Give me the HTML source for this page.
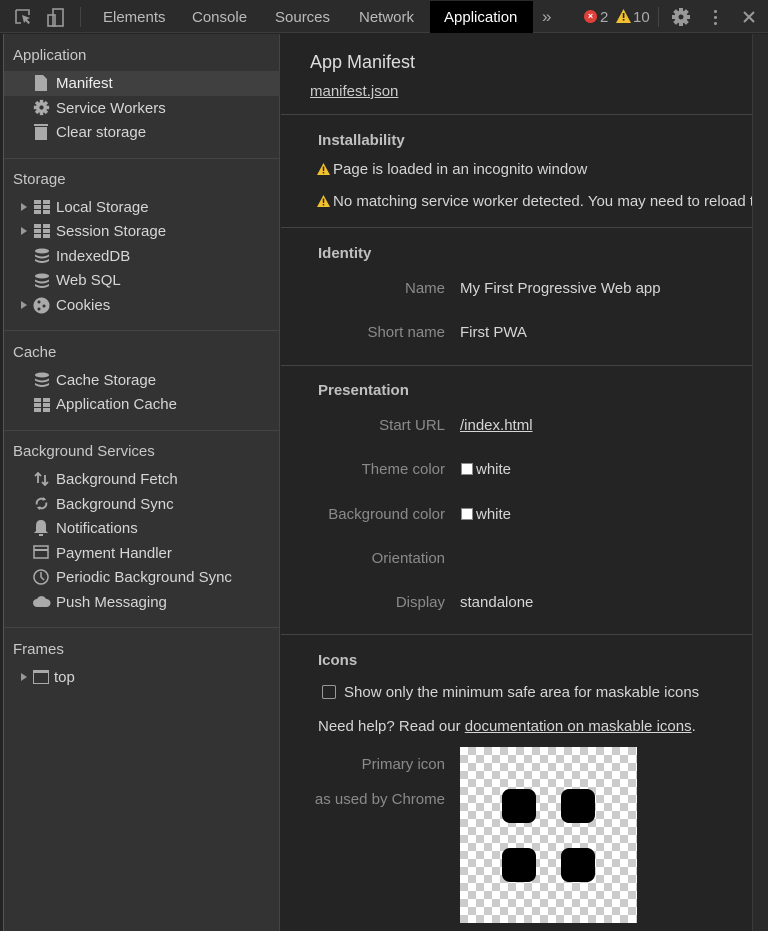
<!DOCTYPE html>
<html><head><style>
*{margin:0;padding:0;box-sizing:border-box}
body{width:768px;height:931px;background:#242424;font-family:"Liberation Sans",sans-serif;font-size:15px;color:#d6d6d6;position:relative;overflow:hidden}
.a{position:absolute;white-space:nowrap;line-height:18px;margin-top:1px}
#tb{position:absolute;left:0;top:0;width:768px;height:33px;background:#2b2b2b;border-bottom:1px solid #3c3c3c}
#sb{position:absolute;left:3px;top:34px;width:277px;height:897px;background:#333;border-right:1px solid #444;border-left:1px solid #555}
.sep{position:absolute;height:1px;background:#444}
.h{color:#c8c8c8}
.lbl{color:#8a8a8a;text-align:right;width:160px;left:285px}
.mh{font-weight:bold;color:#c0c0c0}
.ic{position:absolute;width:15px;height:15px}
.tri{position:absolute;width:0;height:0;border-left:6px solid #999;border-top:4px solid transparent;border-bottom:4px solid transparent}
.w{display:inline-block;vertical-align:-1px;margin-right:3px}
</style></head><body>
<svg width="0" height="0" style="position:absolute"><defs>
<g id="gear"><circle cx="10" cy="10" r="6.5" fill="#999"/><g stroke="#999" stroke-width="4"><path d="M10 1v18M1 10h18M3.6 3.6l12.8 12.8M16.4 3.6L3.6 16.4"/></g><circle cx="10" cy="10" r="2.5" fill="#2b2b2b"/></g>
<g id="warn"><path d="M6.5 0L13 12H0z" fill="#f2c12e"/><rect x="5.8" y="3.5" width="1.4" height="4.5" fill="#222"/><rect x="5.8" y="9" width="1.4" height="1.4" fill="#222"/></g>
</defs></svg>
<div id="tb">
 <svg class="ic" style="left:15px;top:9px;width:18px;height:17px" viewBox="0 0 18 17"><path d="M1 1h13v5M1 1v13h5" fill="none" stroke="#999" stroke-width="1.6"/><path d="M7 6l8 3-3 1.5 3 3-1.5 1.5-3-3L9 14z" fill="#999"/></svg>
 <svg class="ic" style="left:47px;top:8px;width:18px;height:19px" viewBox="0 0 18 19"><rect x="6" y="1" width="10" height="17" fill="none" stroke="#999" stroke-width="1.6"/><rect x="1" y="7" width="7" height="11" fill="none" stroke="#999" stroke-width="1.6"/></svg>
 <div style="position:absolute;left:80px;top:7px;width:1px;height:20px;background:#444"></div>
 <div class="a" style="left:103px;top:8px;color:#bbb">Elements</div>
 <div class="a" style="left:192px;top:8px;color:#bbb">Console</div>
 <div class="a" style="left:275px;top:8px;color:#bbb">Sources</div>
 <div class="a" style="left:359px;top:8px;color:#bbb">Network</div>
 <div style="position:absolute;left:430px;top:1px;width:103px;height:32px;background:#000"></div>
 <div class="a" style="left:444px;top:8px;color:#fff">Application</div>
 <div class="a" style="left:542px;top:7px;color:#aaa;font-size:17px">»</div>
 <div style="position:absolute;left:584px;top:10px;width:13px;height:13px;border-radius:50%;background:#e0403a;color:#fff;font-size:9px;line-height:13px;text-align:center;font-weight:bold">×</div>
 <div class="a" style="left:600px;top:8px;color:#aaa">2</div>
 <svg class="ic" style="left:616px;top:9px;width:15px;height:14px" viewBox="0 0 15 14"><path d="M7.5 0L15 14H0z" fill="#f2c12e"/><rect x="6.8" y="4" width="1.6" height="5" fill="#222"/><rect x="6.8" y="10" width="1.6" height="1.6" fill="#222"/></svg>
 <div class="a" style="left:633px;top:8px;color:#aaa">10</div>
 <div style="position:absolute;left:658px;top:7px;width:1px;height:20px;background:#444"></div>
 <svg class="ic" style="left:671px;top:7px;width:20px;height:20px" viewBox="0 0 20 20"><use href="#gear"/></svg>
 <div style="position:absolute;left:714px;top:10px;width:3px;height:3px;background:#999;border-radius:50%;box-shadow:0 6px #999,0 12px #999"></div>
 <svg class="ic" style="left:743px;top:11px;width:12px;height:12px" viewBox="0 0 12 12"><path d="M1 1l10 10M11 1L1 11" stroke="#999" stroke-width="2"/></svg>
</div>
<div id="sb"></div>
<div style="position:absolute;left:752px;top:34px;width:1px;height:897px;background:#3a3a3a"></div>
<div style="position:absolute;left:753px;top:34px;width:15px;height:897px;background:#2a2a2a"></div>
<div style="position:absolute;left:4px;top:71px;width:276px;height:25px;background:#404040"></div>

<div class="a h" style="left:13px;top:46px">Application</div>
<svg class="ic" style="left:35px;top:75px;width:12px;height:16px" viewBox="0 0 12 16"><path d="M0 0h8l4 4v12H0z" fill="#aaa"/></svg>
<div class="a" style="left:56px;top:74px;color:#eee">Manifest</div>
<svg class="ic" style="left:33px;top:99px;width:17px;height:17px" viewBox="0 0 20 20"><g><circle cx="10" cy="10" r="6.5" fill="#aaa"/><g stroke="#aaa" stroke-width="4"><path d="M10 1v18M1 10h18M3.6 3.6l12.8 12.8M16.4 3.6L3.6 16.4"/></g><circle cx="10" cy="10" r="2.5" fill="#333"/></g></svg>
<div class="a" style="left:56px;top:99px">Service Workers</div>
<svg class="ic" style="left:34px;top:123px;width:14px;height:17px" viewBox="0 0 14 17"><rect x="0" y="1" width="14" height="2" fill="#aaa"/><rect x="1" y="4" width="12" height="13" fill="#aaa"/></svg>
<div class="a" style="left:56px;top:123px">Clear storage</div>
<div class="sep" style="left:4px;top:158px;width:276px"></div>

<div class="a h" style="left:13px;top:170px">Storage</div>
<div class="tri" style="left:21px;top:203px"></div>
<svg class="ic" style="left:34px;top:200px;width:16px;height:14px" viewBox="0 0 16 14"><path d="M0 0h7v4H0zM9 0h7v4H9zM0 5h7v4H0zM9 5h7v4H9zM0 10h7v4H0zM9 10h7v4H9z" fill="#aaa"/></svg>
<div class="a" style="left:56px;top:198px">Local Storage</div>
<div class="tri" style="left:21px;top:227px"></div>
<svg class="ic" style="left:34px;top:224px;width:16px;height:14px" viewBox="0 0 16 14"><path d="M0 0h7v4H0zM9 0h7v4H9zM0 5h7v4H0zM9 5h7v4H9zM0 10h7v4H0zM9 10h7v4H9z" fill="#aaa"/></svg>
<div class="a" style="left:56px;top:222px">Session Storage</div>
<svg class="ic" style="left:34px;top:248px;width:16px;height:16px" viewBox="0 0 16 16"><ellipse cx="8" cy="3" rx="7" ry="2.5" fill="#aaa"/><path d="M1 6.5q7 4 14 0v2q-7 4-14 0zM1 11q7 4 14 0v2q-7 4-14 0z" fill="#aaa"/></svg>
<div class="a" style="left:56px;top:247px">IndexedDB</div>
<svg class="ic" style="left:34px;top:273px;width:16px;height:16px" viewBox="0 0 16 16"><ellipse cx="8" cy="3" rx="7" ry="2.5" fill="#aaa"/><path d="M1 6.5q7 4 14 0v2q-7 4-14 0zM1 11q7 4 14 0v2q-7 4-14 0z" fill="#aaa"/></svg>
<div class="a" style="left:56px;top:271px">Web SQL</div>
<div class="tri" style="left:21px;top:301px"></div>
<svg class="ic" style="left:33px;top:297px;width:17px;height:17px" viewBox="0 0 17 17"><circle cx="8.5" cy="8.5" r="8" fill="#aaa"/><circle cx="6" cy="5" r="1.5" fill="#333"/><circle cx="11" cy="9" r="1.5" fill="#333"/><circle cx="6" cy="12" r="1.5" fill="#333"/></svg>
<div class="a" style="left:56px;top:296px">Cookies</div>
<div class="sep" style="left:4px;top:330px;width:276px"></div>

<div class="a h" style="left:13px;top:343px">Cache</div>
<svg class="ic" style="left:34px;top:372px;width:16px;height:16px" viewBox="0 0 16 16"><ellipse cx="8" cy="3" rx="7" ry="2.5" fill="#aaa"/><path d="M1 6.5q7 4 14 0v2q-7 4-14 0zM1 11q7 4 14 0v2q-7 4-14 0z" fill="#aaa"/></svg>
<div class="a" style="left:56px;top:371px">Cache Storage</div>
<svg class="ic" style="left:34px;top:398px;width:16px;height:14px" viewBox="0 0 16 14"><path d="M0 0h7v4H0zM9 0h7v4H9zM0 5h7v4H0zM9 5h7v4H9zM0 10h7v4H0zM9 10h7v4H9z" fill="#aaa"/></svg>
<div class="a" style="left:56px;top:395px">Application Cache</div>
<div class="sep" style="left:4px;top:430px;width:276px"></div>

<div class="a h" style="left:13px;top:442px">Background Services</div>
<svg class="ic" style="left:34px;top:471px;width:16px;height:16px" viewBox="0 0 16 16"><path d="M4 12V2M1 5l3-3 3 3M11 4v10M8 11l3 3 3-3" fill="none" stroke="#aaa" stroke-width="1.8"/></svg>
<div class="a" style="left:56px;top:470px">Background Fetch</div>
<svg class="ic" style="left:34px;top:496px;width:15px;height:15px" viewBox="0 0 16 16"><path d="M3 9a5 5 0 018-5M13 7a5 5 0 01-8 5" fill="none" stroke="#aaa" stroke-width="2"/><path d="M10 1l3 3-4 1zM6 15l-3-3 4-1z" fill="#aaa"/></svg>
<div class="a" style="left:56px;top:495px">Background Sync</div>
<svg class="ic" style="left:34px;top:520px;width:14px;height:16px" viewBox="0 0 14 16"><path d="M7 0q5 0 5 6v5l2 2H0l2-2V6q0-6 5-6z" fill="#aaa"/><rect x="5" y="14" width="4" height="2" fill="#aaa"/></svg>
<div class="a" style="left:56px;top:519px">Notifications</div>
<svg class="ic" style="left:33px;top:545px;width:16px;height:14px" viewBox="0 0 16 14"><rect x="1" y="1" width="14" height="12" fill="none" stroke="#aaa" stroke-width="1.5"/><rect x="1" y="4" width="14" height="2" fill="#aaa"/></svg>
<div class="a" style="left:56px;top:544px">Payment Handler</div>
<svg class="ic" style="left:33px;top:569px;width:16px;height:16px" viewBox="0 0 16 16"><circle cx="8" cy="8" r="7" fill="none" stroke="#aaa" stroke-width="1.5"/><path d="M8 3v5l3 3" fill="none" stroke="#aaa" stroke-width="1.5"/></svg>
<div class="a" style="left:56px;top:568px">Periodic Background Sync</div>
<svg class="ic" style="left:33px;top:596px;width:18px;height:11px" viewBox="0 0 18 11"><path d="M4 11a4 4 0 010-8 5 5 0 019 0 4 4 0 011 8z" fill="#aaa"/></svg>
<div class="a" style="left:56px;top:593px">Push Messaging</div>
<div class="sep" style="left:4px;top:627px;width:276px"></div>

<div class="a h" style="left:13px;top:640px">Frames</div>
<div class="tri" style="left:21px;top:673px"></div>
<div style="position:absolute;left:33px;top:670px;width:16px;height:14px;border:1.5px solid #aaa;border-top-width:3px"></div>
<div class="a" style="left:54px;top:668px">top</div>

<!-- main -->
<div class="a" style="left:310px;top:50px;font-size:18px;line-height:22px;color:#ddd">App Manifest</div>
<div class="a" style="left:310px;top:82px;text-decoration:underline;color:#ccc">manifest.json</div>
<div class="sep" style="left:281px;top:114px;width:471px"></div>
<div class="a mh" style="left:318px;top:131px">Installability</div>
<div class="a" style="left:317px;top:160px"><svg class="w" width="13" height="12" viewBox="0 0 13 12"><use href="#warn"/></svg>Page is loaded in an incognito window</div>
<div class="a" style="left:317px;top:192px;width:435px;overflow:hidden"><svg class="w" width="13" height="12" viewBox="0 0 13 12"><use href="#warn"/></svg>No matching service worker detected. You may need to reload the page</div>
<div class="sep" style="left:281px;top:227px;width:471px"></div>
<div class="a mh" style="left:318px;top:244px">Identity</div>
<div class="a lbl" style="top:279px">Name</div>
<div class="a" style="left:460px;top:279px">My First Progressive Web app</div>
<div class="a lbl" style="top:323px">Short name</div>
<div class="a" style="left:460px;top:323px">First PWA</div>
<div class="sep" style="left:281px;top:365px;width:471px"></div>
<div class="a mh" style="left:318px;top:381px">Presentation</div>
<div class="a lbl" style="top:416px">Start URL</div>
<div class="a" style="left:460px;top:416px;text-decoration:underline">/index.html</div>
<div class="a lbl" style="top:460px">Theme color</div>
<div style="position:absolute;left:461px;top:463px;width:12px;height:12px;background:#fff;border:1px solid #888"></div>
<div class="a" style="left:476px;top:460px">white</div>
<div class="a lbl" style="top:505px">Background color</div>
<div style="position:absolute;left:461px;top:508px;width:12px;height:12px;background:#fff;border:1px solid #888"></div>
<div class="a" style="left:476px;top:505px">white</div>
<div class="a lbl" style="top:549px">Orientation</div>
<div class="a lbl" style="top:593px">Display</div>
<div class="a" style="left:460px;top:593px">standalone</div>
<div class="sep" style="left:281px;top:634px;width:471px"></div>
<div class="a mh" style="left:318px;top:651px">Icons</div>
<div style="position:absolute;left:322px;top:685px;width:14px;height:14px;border:1px solid #999;border-radius:2px"></div>
<div class="a" style="left:344px;top:683px">Show only the minimum safe area for maskable icons</div>
<div class="a" style="left:318px;top:717px">Need help? Read our <span style="text-decoration:underline">documentation on maskable icons</span>.</div>
<div class="a lbl" style="top:755px">Primary icon</div>
<div class="a lbl" style="top:790px">as used by Chrome</div>
<div style="position:absolute;left:460px;top:747px;width:177px;height:176px;background-color:#fff;background-image:linear-gradient(45deg,#ccc 25%,transparent 25%,transparent 75%,#ccc 75%),linear-gradient(45deg,#ccc 25%,transparent 25%,transparent 75%,#ccc 75%);background-size:16px 16px;background-position:0 0,8px 8px"></div>
<div style="position:absolute;left:502px;top:789px;width:34px;height:34px;background:#000;border-radius:8px"></div>
<div style="position:absolute;left:561px;top:789px;width:34px;height:34px;background:#000;border-radius:8px"></div>
<div style="position:absolute;left:502px;top:848px;width:34px;height:34px;background:#000;border-radius:8px"></div>
<div style="position:absolute;left:561px;top:848px;width:34px;height:34px;background:#000;border-radius:8px"></div>
</body></html>
